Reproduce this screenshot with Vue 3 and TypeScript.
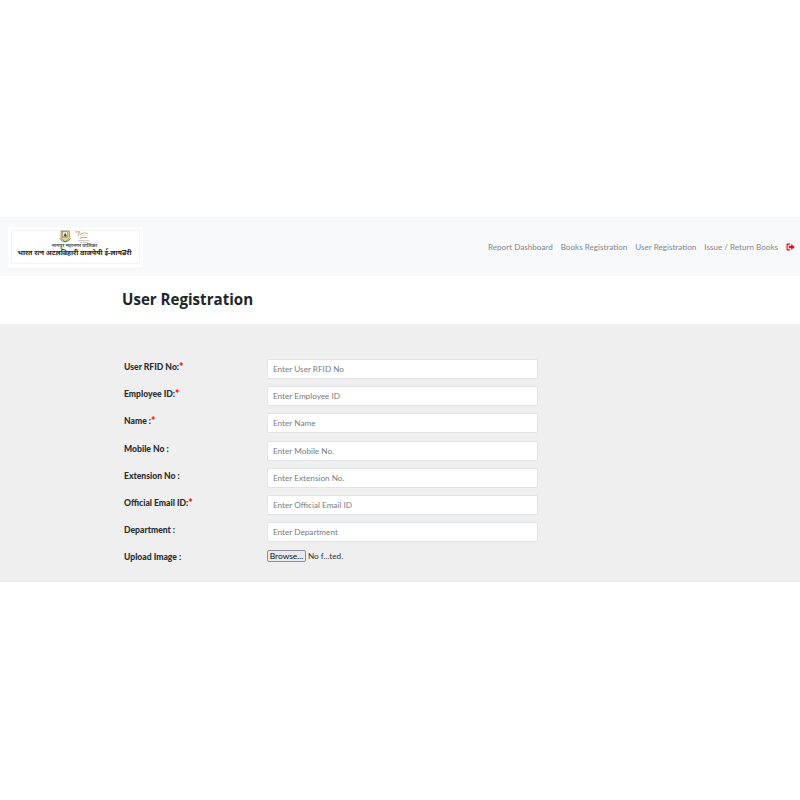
<script setup lang="ts">
interface Field { label: string; required: boolean; placeholder: string }
const navItems: string[] = ['Report Dashboard', 'Books Registration', 'User Registration', 'Issue / Return Books']
const fields: Field[] = [
  { label: 'User RFID No:', required: true, placeholder: 'Enter User RFID No' },
  { label: 'Employee ID:', required: true, placeholder: 'Enter Employee ID' },
  { label: 'Name :', required: true, placeholder: 'Enter Name' },
  { label: 'Mobile No :', required: false, placeholder: 'Enter Mobile No.' },
  { label: 'Extension No :', required: false, placeholder: 'Enter Extension No.' },
  { label: 'Official Email ID:', required: true, placeholder: 'Enter Official Email ID' },
  { label: 'Department :', required: false, placeholder: 'Enter Department' },
]
</script>

<template>
  <div class="page">
    <nav class="navbar">
      <div class="logo">
        <div class="logo-inner">
          <svg class="emblems" width="36" height="14" viewBox="0 0 36 15">
            <path d="M3 1h9v7.500l-4.500 4.500L3 8.500z" fill="#e8d27a" stroke="#8a7a2a" stroke-width=".7" />
            <rect x="4.800" y="2" width="5.400" height="6" fill="#f4f4ea" stroke="#666" stroke-width=".5" />
            <path d="M7.500 3l2 4h-4z" fill="#445" />
            <path d="M1.500 9q6 7 12 0" fill="none" stroke="#3d7a4a" stroke-width="1" />
            <path d="M18 2h5l-2 5" fill="none" stroke="#c9bb88" stroke-width="1.100" />
            <path d="M23 5q4-3 9-1" fill="none" stroke="#ecb070" stroke-width="1.300" />
            <path d="M23 7q4-2 9-1" fill="none" stroke="#e6ece6" stroke-width="1.100" />
            <path d="M23 9q4-2 8-1" fill="none" stroke="#8cc08c" stroke-width="1.100" />
            <rect x="21" y="11" width="12" height="1" fill="#bbb" />
            <rect x="23" y="13" width="9" height="1" fill="#ccc" />
          </svg>
          <div class="logo-sub">नागपुर महानगर पालिका</div>
          <div class="logo-title">भारत रत्न अटलबिहारी वाजपेयी ई-लायब्ररी</div>
        </div>
      </div>
      <ul class="menu">
        <li v-for="item in navItems" :key="item">{{ item }}</li>
        <li class="exit">
          <svg width="9" height="8" viewBox="0 0 9 8">
            <path d="M4 .5H1.200Q.5.5.5 1.200v5.600Q.5 7.500 1.200 7.500H4V6.300H1.700V1.700H4z" fill="#ee1111" />
            <path d="M5.200 1 8.800 4 5.200 7V5.300H2.800V2.700H5.200z" fill="#ee1111" />
          </svg>
        </li>
      </ul>
    </nav>

    <header class="title-bar">
      <h1>User Registration</h1>
    </header>

    <section class="panel">
      <form class="form">
        <div v-for="f in fields" :key="f.label" class="row">
          <label>{{ f.label }}<span v-if="f.required" class="req">*</span></label>
          <input type="text" :placeholder="f.placeholder" />
        </div>
        <div class="row upload">
          <label>Upload Image :</label>
          <div class="file">
            <button type="button">Browse...</button>
            <span>No f...ted.</span>
          </div>
        </div>
      </form>
    </section>
  </div>
</template>

<style>
html, body { margin: 0; background: #fff; }
</style>

<style scoped>
.page {
  padding-top: 217px;
  font-family: "Lato", "Open Sans", sans-serif;
  color: #212529;
}
.navbar {
  height: 59px;
  background: #f8f9fa;
  display: flex;
  align-items: center;
  justify-content: space-between;
  padding: 0 5px 0 8px;
  box-sizing: border-box;
}
.logo {
  width: 135px;
  height: 40px;
  background: #fff;
  padding: 3px;
  box-sizing: border-box;
}
.logo-inner {
  height: 100%;
  border: 1px solid #f3f3f3;
  box-sizing: border-box;
  display: flex;
  flex-direction: column;
  align-items: center;
  padding-right: 2px;
}
.emblems { margin-top: -1px; flex: none; }
.logo-sub {
  font-family: "Noto Sans", "Noto Sans CJK SC", sans-serif;
  font-size: 5px;
  line-height: 5px;
  font-weight: 600;
  color: #444;
  margin-top: -1px;
}
.logo-title {
  font-family: "Noto Sans", "Noto Sans CJK SC", sans-serif;
  font-size: 7px;
  line-height: 9px;
  font-weight: 700;
  color: #222;
  white-space: nowrap;
}
.menu {
  list-style: none;
  display: flex;
  align-items: center;
  gap: 8px;
  margin: 0;
  padding: 0;
  font-size: 8.100px;
  color: #84888c;
}
.exit { display: flex; align-items: center; }
.title-bar {
  height: 46px;
  padding: 0 0 2px 122px;
  display: flex;
  align-items: center;
}
h1 {
  margin: 0 0 1px;
  font-family: "Open Sans", sans-serif;
  font-size: 15.100px;
  font-weight: 700;
  color: #212529;
}
.panel {
  height: 258px;
  background: #efefef;
  padding: 35px 0 0 124px;
  box-sizing: border-box;
}
.form {
  display: flex;
  flex-direction: column;
  gap: 7.200px;
}
.row {
  display: flex;
  align-items: flex-start;
  height: 20px;
}
label {
  width: 143px;
  font-size: 8.600px;
  font-weight: 900;
  line-height: 16px;
  color: #2a2e33;
}
.req { color: #f00; font-size: 10.500px; line-height: 0; position: relative; top: 1px; }
input {
  width: 271px;
  height: 20px;
  box-sizing: border-box;
  border: 1px solid #e1e4e7;
  border-radius: 2px;
  background: #fff;
  padding: 0 5px;
  font: 8.200px "Lato", sans-serif;
  outline: none;
}
input::placeholder { color: #777d84; opacity: 1; }
.upload label { line-height: 17px; }
.file {
  display: flex;
  align-items: center;
  height: 12px;
  gap: 2px;
  font-size: 8.200px;
  color: #333;
  margin-top: 1px;
}
.file button {
  width: 39px;
  height: 12px;
  padding: 0;
  border: 1px solid #8f8f9d;
  border-radius: 2px;
  background: #e9e9ed;
  font: 8.400px "Lato", sans-serif;
  color: #111;
}
</style>
